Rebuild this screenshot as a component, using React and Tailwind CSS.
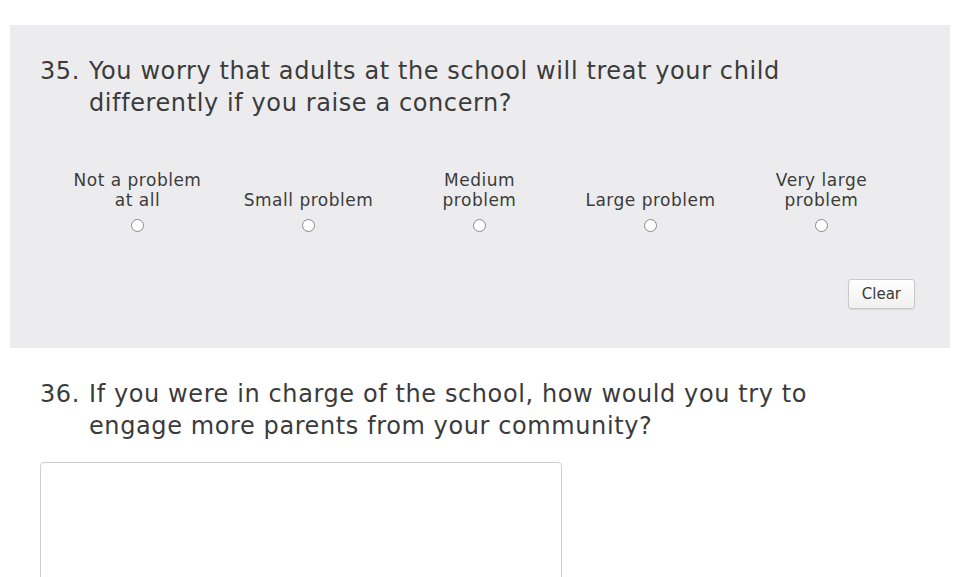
import { useState } from 'react'

const options = [
  ['Not a problem', 'at all'],
  ['Small problem'],
  ['Medium', 'problem'],
  ['Large problem'],
  ['Very large', 'problem'],
]

export default function App() {
  const [value, setValue] = useState(null)

  return (
    <div className="min-h-screen bg-white pt-[25px] px-[10px] text-[#3b3b3b]" style={{ fontFamily: '"DejaVu Sans", sans-serif' }}>
      <div className="w-[940px] bg-[#ececee] pl-[30px] pr-[35px] pt-[30px] h-[323px]">
        <div className="flex text-[24px] leading-[32px] tracking-[0.6px]">
          <span className="w-[49px] shrink-0">35.</span>
          <span className="max-w-[720px]">You worry that adults at the school will treat your child differently if you raise a concern?</span>
        </div>

        <div className="grid grid-cols-5 w-[855px] ml-[12px] mt-[51px]">
          {options.map((lines, i) => (
            <label key={i} className="flex flex-col items-center cursor-pointer">
              <div className="h-[40px] flex flex-col justify-end text-center text-[17px] leading-[20px] tracking-[0.5px]">
                {lines.map(l => <span key={l}>{l}</span>)}
              </div>
              <input
                type="radio"
                name="q35"
                checked={value === i}
                onChange={() => setValue(i)}
                className="mt-[9px] w-[13px] h-[13px] appearance-none rounded-full border border-[#8a8a8a] bg-white"
              />
            </label>
          ))}
        </div>

        <div className="flex justify-end mt-[47px]">
          <button
            onClick={() => setValue(null)}
            className="h-[30px] px-[13px] text-[15px] rounded-[3px] border border-[#c8c8c8] bg-gradient-to-b from-white to-[#f0f0f0] shadow-[0_1px_1px_rgba(0,0,0,0.08)]"
          >
            Clear
          </button>
        </div>
      </div>

      <div className="pl-[30px] pt-[30px]">
        <div className="flex text-[24px] leading-[32px] tracking-[0.6px]">
          <span className="w-[49px] shrink-0">36.</span>
          <span className="max-w-[760px]">If you were in charge of the school, how would you try to engage more parents from your community?</span>
        </div>
        <textarea className="mt-[20px] block w-[522px] h-[130px] border border-[#cfcfcf] rounded-[4px] bg-white" />
      </div>
    </div>
  )
}
